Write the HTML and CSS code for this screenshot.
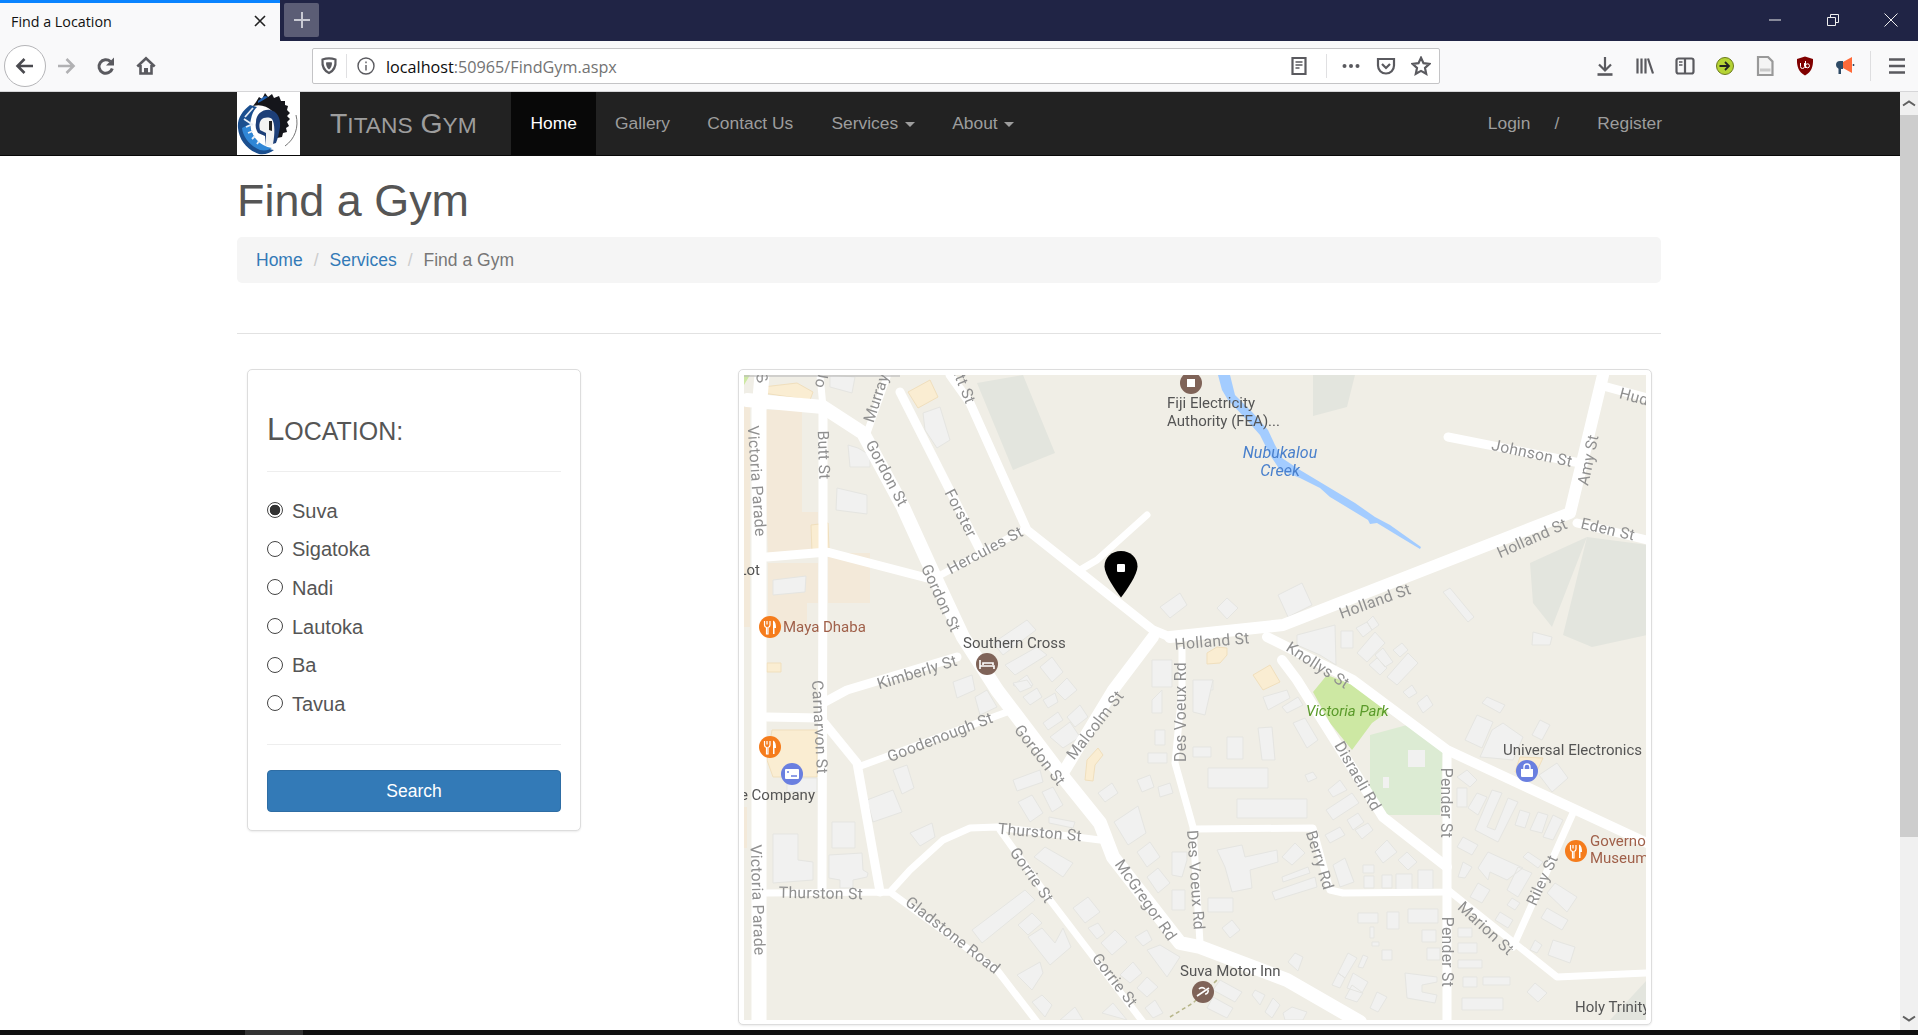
FILE: index.html
```html
<!DOCTYPE html>
<html lang="en">
<head>
    <meta charset="UTF-8">
    <meta name="viewport" content="width=device-width, initial-scale=1.0">
    <title>Find a Location</title>
    <link rel="stylesheet" href="styles.css">
</head>
<body>
    <!-- browser chrome -->
    <div class="tabbar">
        <div class="tab">
            <span class="tab-title">Find a Location</span>
            <svg class="tab-close" viewBox="0 0 12 12"><path d="M1 1l10 10M11 1L1 11"/></svg>
        </div>
        <div class="new-tab"><svg viewBox="0 0 20 20"><path d="M10 2v16M2 10h16"/></svg></div>
        <div class="win-controls">
            <svg viewBox="0 0 14 14"><path d="M1 7h12"/></svg>
            <svg viewBox="0 0 14 14"><path d="M1.500 4.500h8v8h-8zM4.500 4.500v-3h8v8h-3"/></svg>
            <svg viewBox="0 0 14 14"><path d="M0.500 0.500l13 13M13.500 0.500l-13 13"/></svg>
        </div>
    </div>
    <div class="toolbar">
        <div class="back-btn">
            <svg viewBox="0 0 20 20"><path d="M18 10H2.500M9.500 3l-7 7 7 7"/></svg>
        </div>
        <svg class="tb-icon forward" viewBox="0 0 20 20"><path d="M2 10h15.500M10.500 3l7 7-7 7"/></svg>
        <svg class="tb-icon reload" viewBox="0 0 20 20"><path d="M16.300 12.500a6.800 6.800 0 1 1-1.800-7"/><path class="solid" d="M18 1.500v8h-8z"/></svg>
        <svg class="tb-icon home" viewBox="0 0 20 20"><path d="M1.300 10.500L10 2.300l8.700 8.200M4.500 9v8.500h11V9"/><path class="solid" d="M8 12h4v5.500H8z"/></svg>
        <div class="urlbar">
            <svg class="tb-icon" viewBox="0 0 20 20"><path d="M3.500 3.500c4-1.300 9-1.300 13 0 .5 6-1 11-6.500 13.500C4.500 14.500 3 9.500 3.500 3.500z"/><path class="solid" d="M7 6.500c2-.4 4-.4 6 0 0 3-.8 5.500-3 7-2.200-1.500-3-4-3-7z"/></svg>
            <span class="url-sep first"></span>
            <svg class="tb-icon thin info" viewBox="0 0 20 20"><circle cx="10" cy="10" r="8"/><path d="M10 9v5.500M10 5.500v1.800"/></svg>
            <span class="url-text"><b>localhost</b>:50965/FindGym.aspx</span>
            <svg class="tb-icon reader" viewBox="0 0 20 20"><path d="M3.500 2h13v16h-13z"/><path class="hair" d="M6.500 6h7M6.500 9h7M6.500 12h4"/></svg>
            <span class="url-sep"></span>
            <svg class="tb-icon dots" viewBox="0 0 20 20"><circle cx="3.500" cy="10" r="2"/><circle cx="10" cy="10" r="2"/><circle cx="16.500" cy="10" r="2"/></svg>
            <svg class="tb-icon" viewBox="0 0 20 20"><path d="M2 3h16v6.500c0 4.500-3.500 8-8 8s-8-3.500-8-8z"/><path d="M6 8l4 4 4-4"/></svg>
            <svg class="tb-icon star" viewBox="0 0 20 20"><path d="M10 1.800l2.500 5.400 5.900.7-4.400 4 1.200 5.900L10 14.900l-5.200 2.900L6 11.900l-4.400-4 5.900-.7z"/></svg>
        </div>
        <div class="tb-right">
            <svg class="tb-icon" viewBox="0 0 20 20"><path d="M10 1v13M4 8.500l6 6 6-6"/><path d="M2.500 18.500h15" class="thick"/></svg>
            <svg class="tb-icon" viewBox="0 0 20 20"><path d="M2.500 2.500v15M6.500 2.500v15M10.500 2.500v15M13 2.500l5 15"/></svg>
            <svg class="tb-icon" viewBox="0 0 20 20"><rect x="1.500" y="2.500" width="17" height="15" rx="2"/><path d="M10 2.500v15"/><path class="hair" d="M4 6h3.500M4 9h3.500"/></svg>
            <svg class="tb-icon flat" viewBox="0 0 20 20"><circle cx="10" cy="10" r="8.500" fill="#b5d334" stroke="#6b7a1c" stroke-width="1"/><path d="M4.500 10h9M10 6l4 4-4 4" fill="none" stroke="#222" stroke-width="1.800"/></svg>
            <svg class="tb-icon flat" viewBox="0 0 20 20"><path d="M3 1h10l4.500 4.500V19H3z" fill="#f4f4f4" stroke="#999"/><path d="M5 12.500h10.500v3H5z" fill="#c9c9c9"/></svg>
            <svg class="tb-icon flat" viewBox="0 0 20 20"><path d="M10 0.500l8 2.500c.3 7.500-1.500 13-8 16.500C3.500 16 1.700 10.500 2 3z" fill="#800000"/><path d="M5.500 7v3.500a2 2 0 0 0 4 0V7M10.500 5v7" fill="none" stroke="#fff" stroke-width="1"/><circle cx="12.500" cy="9.800" r="2" fill="none" stroke="#fff" stroke-width="1"/></svg>
            <svg class="tb-icon flat" viewBox="0 0 20 20"><path d="M1 9a4 4 0 0 1 4-4h3v8H6v5H3.500v-5.300A4 4 0 0 1 1 9z" fill="#2f4b66"/><path d="M8 6l9-5v16l-9-5z" fill="#ff6a39"/><path d="M18.500 8v2" stroke="#2f4b66" stroke-width="1.500"/></svg>
            <span class="tb-sep"></span>
            <svg class="tb-icon burger" viewBox="0 0 20 20"><path d="M2 3.500h16M2 10h16M2 16.500h16"/></svg>
        </div>
    </div>

    <!-- page -->
    <div class="viewport">
        <div class="site">
            <nav class="navbar">
                <svg class="logo" viewBox="0 0 63 63">
                    <rect width="63" height="63" fill="#fff"/>
                    <path d="M59 23c3 12-1 24-11 31" stroke="#777" stroke-width="1" fill="none"/>
                    <path d="M13 13C5 19 0 27 1 36c1 12 9 22 21 26 6 1 11-1 15-4-7-1-14-4-18-10-5-7-7-14-5-21 1-5 3-9 6-12z" fill="#1b4f8f"/>
                    <path d="M5 36c1 9 8 18 18 22 5 1 9 0 12-2-6-1-12-4-16-9-4-5-6-10-6-15z" fill="#2f86d6"/>
                    <path d="M19 10l3-5 3 2 3-6 3 4 4-3 2 4 5-2 2 5 4 0 0 4 3 1-1 4 3 3-3 3 3 3-3 3 2 4-3 2 1 4-4 1-1 4-5 1-2 2c3-10 3-21-3-29-5-5-12-7-19-5z" fill="#15161b"/>
                    <path d="M21 9l4-3 3-2 3 1c-3 2-6 4-10 6z" fill="#1f62b5"/>
                    <path d="M19 30c0-8 7-13 14-12 7 1 11 8 10 17-1 6-2 11-4 16l-10 3 -1-10-7-3c-2-3-3-7-2-11z" fill="#1d3f78"/>
                    <path d="M24 28c3-3 8-3 11-1 3 5 3 15 1 25-2 2-5 2-7 2l0-13-6-3c-1-4-1-7 1-10z" fill="#f3f3f3"/>
                    <path d="M32 29l3 0 0 10-3-1z" fill="#222"/>
                    <path d="M8 25l8-9M7 27l9 6M9 35l7-3M11 41l5-2M15 47l3-3M20 52l2-3" stroke="#e8eef6" stroke-width="1.800" fill="none"/>
                </svg>
                <a class="brand" href="#">T<span class="sc">itans</span> G<span class="sc">ym</span></a>
                <ul class="nav-links">
                    <li class="active"><a href="#">Home</a></li>
                    <li><a href="#">Gallery</a></li>
                    <li><a href="#">Contact Us</a></li>
                    <li><a href="#">Services <span class="caret"></span></a></li>
                    <li><a href="#">About <span class="caret"></span></a></li>
                </ul>
                <div class="nav-auth">
                    <a href="#">Login</a>
                    <span class="slash">/</span>
                    <a href="#">Register</a>
                </div>
            </nav>

            <div class="container">
                <h1>Find a Gym</h1>
                <ol class="breadcrumb">
                    <li><a href="#">Home</a></li>
                    <li class="bc-sep">/</li>
                    <li><a href="#">Services</a></li>
                    <li class="bc-sep">/</li>
                    <li class="bc-current">Find a Gym</li>
                </ol>
                <hr class="page-rule">
                <div class="finder">
                    <form class="panel location-panel">
                        <h3>L<span class="sc">ocation:</span></h3>
                        <hr>
                        <div class="radio-list">
                            <label><input type="radio" name="loc" checked> <span>Suva</span></label>
                            <label><input type="radio" name="loc"> <span>Sigatoka</span></label>
                            <label><input type="radio" name="loc"> <span>Nadi</span></label>
                            <label><input type="radio" name="loc"> <span>Lautoka</span></label>
                            <label><input type="radio" name="loc"> <span>Ba</span></label>
                            <label><input type="radio" name="loc"> <span>Tavua</span></label>
                        </div>
                        <hr>
                        <button type="button" class="btn-search">Search</button>
                    </form>
                    <div class="panel map-panel">
                        <svg class="map" viewBox="744 375 902 645" width="902" height="645">
                            <defs>
                                <symbol id="food" viewBox="-11 -11 22 22" overflow="visible">
                                    <circle r="11" fill="#f57c1c"/>
                                    <path d="M-5.500 -6v4c0 1.500 1 2.200 2 2.500V7h1.500V.5c1-.3 2-1 2-2.500v-4M-3 -6v3.500" fill="none" stroke="#fff" stroke-width="1.200"/>
                                    <path d="M3 7V-6.500c2.500 1 3 4 3 7.500H4.500v6z" fill="#fff"/>
                                </symbol>
                            </defs>
                            <rect x="744" y="375" width="902" height="645" fill="#f0eee6"/>

                            <!-- land areas -->
                            <path class="tan-soft" d="M763 410L802 410 802 512 818 512 818 552 768 553Z M744 407L750 407 750 627 744 627Z M768 563L818 563 818 603 807 603 807 627 768 627Z M828 553L870 553 870 603 828 603Z M744 807L747 807 747 848 744 848Z"/>
                            <path class="tan" d="M763 387L797 383 813 392 810 400 763 393Z M908 392L930 380 938 397 918 408Z M811 525L828 523 829 548 812 553Z M767 663L781 663 781 672 767 672Z M772 730L817 730 817 777 773 777 767 760Z M1085 780L1087 760 1098 748 1103 755 1095 765 1093 781Z M1207 653L1217 647 1227 648 1227 655 1220 663 1207 664Z M1253 675L1270 665 1280 682 1263 690Z M1515 772L1520 757 1543 758 1535 775Z"/>
                            <path class="grey-zone" d="M977 383L1023 375 1055 453 1013 470Z M1313 375L1355 375 1347 407 1313 416Z M1530 563L1587 537 1552 627 1533 603Z M1587 537L1647 545 1647 635 1592 647 1563 635Z M1610 1020L1647 980 1647 1020Z"/>
                            <path class="park" d="M1313 692L1327 675 1353 685 1390 710 1372 723 1352 750 1330 723Z M744 375L750 375 744 385Z"/>
                            <path class="park-soft" d="M1370 735L1407 725 1443 750 1440 815 1387 815 1370 793Z"/>

                            <!-- buildings -->
                            <path class="bldg" d="M923 413L940 407 950 440 937 448 925 430Z M848 445L858 448 870 455 870 467 850 467Z M837 488L867 495 867 514 836 510Z M773 580L806 576 805 592 773 595Z M830 375L855 377 852 393 830 387Z M993 643L1027 620 1036 630 1003 655Z M1005 665L1037 647 1047 655 1015 675Z M1040 667L1052 657 1063 672 1052 682Z M1013 685L1027 675 1033 685 1022 690Z M1160 607L1180 593 1187 605 1170 618Z M1152 660L1172 660 1172 687 1152 687Z M953 682L972 675 975 690 957 698Z M1055 690L1067 678 1077 690 1065 700Z"/>
                            <path class="bldg" d="M1217 608L1227 598 1238 608 1227 619Z M1278 595L1302 583 1312 605 1288 617Z M1443 592L1450 588 1474 617 1468 622Z M1533 632L1552 637 1550 645 1532 645Z M1297 635L1335 625 1336 665 1320 655 1297 645Z M1341 631L1353 631 1353 648 1341 648Z M1356 628L1367 622 1372 630 1363 637Z M1367 622L1373 616 1379 625 1372 630Z M1357 653L1375 632 1385 643 1367 662Z M1375 655L1383 648 1393 662 1385 667Z M1393 650L1402 643 1408 650 1400 657Z M1369 665L1377 658 1387 668 1380 675Z M1387 677L1408 653 1418 663 1397 685Z M1198 682L1213 680 1213 690 1198 690Z"/>
                            <path class="bldg" d="M787 778L817 778 817 792 787 792Z M773 834L798 834 798 860 813 862 813 880 773 883Z M832 822L855 822 855 848 832 848Z M829 855L862 853 863 870 868 873 867 877 853 880 853 888 840 888 840 880 829 878Z M867 800L893 790 902 812 873 822Z M893 770L907 765 914 788 902 794Z M910 833L932 823 935 837 920 846Z M975 697L987 690 997 707 980 715Z M1013 780L1040 770 1043 782 1017 791Z M1018 802L1032 795 1043 813 1030 822Z M1042 792L1053 787 1063 805 1052 812Z M1049 817L1075 822 1073 828 1049 823Z M1034 857L1045 847 1073 863 1063 877Z M972 930L1025 890 1035 900 982 943Z M1018 925L1032 913 1042 923 1028 935Z M1028 937L1042 928 1055 943 1063 928 1071 947 1050 965Z M1017 975L1040 962 1043 973 1032 990Z M1032 1002L1042 995 1052 1005 1045 1017Z M1060 1020L1075 1007 1083 1020Z M1102 1013L1113 1003 1127 1020Z"/>
                            <path class="bldg" d="M1013 683L1027 680 1032 687 1020 692Z M1023 697L1037 688 1042 697 1030 705Z M1043 700L1055 693 1058 702 1048 708Z M1043 723L1058 712 1063 720 1048 730Z M1067 717L1080 705 1088 717 1075 727Z M1050 737L1070 722 1080 737 1063 748Z M1098 793L1112 783 1118 793 1105 802Z M1137 780L1150 775 1154 787 1142 792Z M1158 787L1170 783 1173 793 1160 797Z M1114 822L1138 806 1146 833 1128 845Z M1137 852L1150 842 1160 857 1147 867Z M1147 877L1158 868 1170 883 1158 893Z M1073 908L1088 897 1100 912 1085 923Z M1088 928L1098 923 1105 933 1097 939Z M1101 943L1115 930 1127 942 1112 955Z M1135 937L1147 930 1152 940 1143 946Z M1147 950L1160 945 1180 957 1167 977Z M1120 975L1133 962 1142 973 1130 983Z M1137 988L1147 977 1158 987 1147 997Z M1145 1008L1155 1000 1163 1013 1153 1018Z M1155 730L1165 730 1165 745 1155 745Z M1148 753L1167 753 1167 763 1148 763Z M1152 700L1162 690 1162 713 1152 713Z"/>
                            <path class="bldg" d="M1193 680L1213 680 1205 715 1193 712Z M1227 737L1243 737 1243 759 1227 759Z M1258 728L1272 727 1275 760 1262 760Z M1193 747L1211 747 1211 757 1193 757Z M1208 768L1268 768 1268 788 1208 788Z M1237 799L1307 799 1307 818 1237 818Z M1217 850L1242 845 1245 857 1277 850 1278 862 1250 870 1252 888 1232 892 1225 867Z M1282 857L1295 843 1305 853 1292 865Z M1172 852L1187 852 1187 860 1182 877 1172 875Z M1172 890L1185 890 1185 910 1172 910Z M1208 898L1233 898 1233 912 1208 912Z M1222 928L1232 920 1240 930 1230 938Z M1288 962L1295 953 1303 957 1298 971Z M1263 697L1287 690 1290 698 1268 710Z M1282 707L1298 697 1303 705 1287 713Z M1293 723L1305 718 1318 740 1307 748Z M1305 775L1313 772 1317 778 1308 782Z M1328 790L1340 780 1347 790 1333 797Z M1326 810L1352 793 1359 803 1333 820Z M1347 820L1358 813 1364 822 1353 830Z M1355 830L1368 823 1373 830 1362 839Z M1325 835L1340 827 1345 835 1330 843Z M1375 852L1387 840 1397 852 1383 863Z M1398 860L1407 852 1417 862 1408 870Z M1333 865L1345 858 1354 882 1340 887Z"/>
                            <path class="bldg" d="M1363 865L1374 865 1374 873 1363 873Z M1364 876L1374 876 1374 888 1364 888Z M1382 875L1392 875 1392 888 1382 888Z M1396 874L1412 874 1412 892 1396 892Z M1418 870L1433 870 1433 889 1418 889Z M1272 892L1315 877 1317 887 1275 900Z M1282 877L1308 867 1310 873 1283 882Z M1457 777L1467 770 1477 780 1470 787Z M1457 788L1467 788 1467 807 1457 807Z M1468 808L1477 793 1487 797 1478 815Z M1475 830L1492 790 1502 793 1487 827 1495 830 1508 798 1518 802 1498 842Z M1515 825L1520 810 1530 813 1525 828Z M1530 830L1538 812 1548 815 1542 833Z M1543 837L1553 815 1563 820 1553 840Z M1457 847L1463 837 1478 845 1472 855Z M1458 877L1463 862 1472 867 1465 878Z M1478 868L1488 852 1523 868 1507 880 1490 872 1488 880Z M1507 890L1518 867 1532 873 1518 897Z M1523 857L1528 852 1543 862 1538 868Z M1470 897L1478 883 1490 890 1482 903Z M1507 905L1512 898 1520 903 1515 910Z M1495 920L1500 912 1513 920 1508 928Z M1547 893L1555 883 1577 897 1567 912Z M1541 918L1547 908 1568 920 1562 930Z M1530 950L1535 940 1542 945 1537 953Z M1548 955L1553 940 1575 947 1570 963Z"/>
                            <path class="bldg" d="M1465 740L1477 715 1493 722 1482 748Z M1480 757L1492 730 1503 723 1510 728 1523 737 1513 760 1492 758Z M1532 735L1540 720 1550 725 1542 740Z M1482 703L1487 697 1505 705 1500 713Z M1403 692L1412 685 1417 693 1409 698Z M1417 703L1427 695 1433 705 1423 713Z M1539 775L1557 763 1568 778 1552 792Z M1358 913L1378 913 1378 923 1358 923Z M1387 912L1399 912 1399 929 1387 929Z M1408 909L1438 909 1438 923 1408 923Z M1422 930L1436 930 1436 942 1422 942Z M1427 948L1440 948 1440 960 1427 960Z M1370 927L1374 927 1374 938 1370 938Z M1372 942L1379 942 1379 946 1372 946Z M1382 950L1392 950 1392 960 1382 960Z M1338 973L1348 953 1357 958 1345 978Z M1358 967L1363 955 1368 957 1363 968Z M1332 985L1338 973 1345 978 1340 988Z M1347 988L1353 973 1368 982 1362 993Z M1345 998L1352 985 1363 993 1357 1002Z M1370 1008L1377 992 1387 997 1378 1012Z M1405 973L1437 977 1437 982 1422 985 1422 992 1437 995 1435 1003 1407 998Z M1458 928L1472 928 1472 937 1458 937Z M1458 943L1477 943 1477 953 1458 953Z M1458 960L1482 960 1482 968 1458 968Z M1463 977L1477 977 1477 987 1463 987Z M1483 977L1510 977 1510 985 1483 985Z M1462 998L1503 998 1503 1010 1462 1010Z M1527 992L1535 983 1547 993 1538 1002Z M1213 990L1220 980 1242 992 1235 1002Z M1207 1008L1213 997 1233 1008 1227 1018Z M1252 995L1255 990 1265 995 1260 1005Z M1265 1012L1273 998 1280 1005 1272 1018Z M1283 1013L1292 1007 1307 1012 1303 1020 1285 1020Z"/>
                            <path class="bldg-on-park" d="M1408 750L1425 750 1425 767 1408 767Z M1383 777L1389 777 1389 788 1383 788Z"/>

                            <!-- water -->
                            <path class="creek" d="M1218 375L1230 375 1235 395 1252 412 1268 430 1275 445 1282 458 1300 470 1325 485 1355 503 1375 517 1390 525 1421 547 1420 549 1400 537 1377 523 1370 524 1368 520 1340 503 1330 497 1320 488 1300 478 1280 470 1270 455 1260 435 1245 418 1228 400 1222 390Z"/>

                            <!-- roads -->
                            <path class="road r15" d="M762 375L759 410V1020"/>
                            <path class="road r14" d="M747 400L823 407 863 433 903 507 933 573 963 637 997 690 1063 777 1100 823 1113 857 1180 943 1200 947 1287 980 1360 1022"/>
                            <path class="road r7" d="M820 375L823 407"/>
                            <path class="road r9" d="M823 407V552L822 890M767 557L827 552 927 578M822 720L857 763 880 892M767 717L820 718M900 392L980 550"/>
                            <path class="road r7" d="M937 577L1023 530M887 377L867 433M1147 515L1097 560 1080 570M1007 712L858 767M1448 890L1557 977 1647 973M1573 813L1513 947M767 893L890 892 910 870 943 840 970 828 997 827 1100 840M1000 830L1050 900 1143 1022M890 892L997 970 1037 1022M1182 650V690L1175 763 1193 827 1200 943M1195 829L1313 828 1330 890 1343 893 1447 892"/>
                            <path class="road r9" d="M950 375L970 403 1027 530 1153 630 1170 637M957 657L847 690 823 703M1448 437L1580 463M1577 523L1647 540M1607 387L1647 398M1447 750V1022"/>
                            <path class="road r12" d="M1170 637L1283 625 1570 513 1603 375M1153 637L1113 690 1063 773"/>
                            <path class="road r10" d="M1267 637L1353 680 1447 750 1647 843M1282 660L1297 680 1383 817 1447 867"/>

                            <path class="trail" d="M1170 1017L1193 1003 1217 980"/>
                            <rect class="map-shade" x="744" y="375" width="156" height="2"/>

                            <!-- road names -->
                            <g class="road-labels">
                                <text transform="translate(762 378) rotate(70)">S</text>
                                <text transform="translate(822 379) rotate(100)">Jo</text>
                                <text transform="translate(757 481) rotate(86)">Victoria Parade</text>
                                <text transform="translate(824 455) rotate(88)">Butt St</text>
                                <text transform="translate(876 398) rotate(-72)">Murray</text>
                                <text transform="translate(887 473) rotate(62)">Gordon St</text>
                                <text transform="translate(961 513) rotate(63)">Forster</text>
                                <text transform="translate(962 380) rotate(68)">Butt St</text>
                                <text transform="translate(985 550) rotate(-28)">Hercules St</text>
                                <text transform="translate(941 598) rotate(65)">Gordon St</text>
                                <text transform="translate(917 672) rotate(-17)">Kimberly St</text>
                                <text transform="translate(820 727) rotate(87)">Carnarvon St</text>
                                <text transform="translate(940 737) rotate(-21)">Goodenough St</text>
                                <text transform="translate(1040 755) rotate(52)">Gordon St</text>
                                <text transform="translate(1095 725) rotate(-52)">Malcolm St</text>
                                <text transform="translate(1040 832) rotate(5)">Thurston St</text>
                                <text transform="translate(1032 875) rotate(55)">Gorrie St</text>
                                <text transform="translate(1146 900) rotate(55)">McGregor Rd</text>
                                <text transform="translate(1115 980) rotate(52)">Gorrie St</text>
                                <text transform="translate(821 893) rotate(1)">Thurston St</text>
                                <text transform="translate(953 935) rotate(38)">Gladstone Road</text>
                                <text transform="translate(758 900) rotate(88)">Victoria Parade</text>
                                <text transform="translate(1532 453) rotate(12)">Johnson St</text>
                                <text transform="translate(1588 460) rotate(-78)">Amy St</text>
                                <text transform="translate(1532 538) rotate(-24)">Holland St</text>
                                <text transform="translate(1608 529) rotate(13)">Eden St</text>
                                <text transform="translate(1647 400) rotate(15)">Hudson</text>
                                <text transform="translate(1375 601) rotate(-20)">Holland St</text>
                                <text transform="translate(1212 641) rotate(-5)">Holland St</text>
                                <text transform="translate(1318 665) rotate(33)">Knollys St</text>
                                <text transform="translate(1180 712) rotate(-90)">Des Voeux Rd</text>
                                <text transform="translate(1196 880) rotate(86)">Des Voeux Rd</text>
                                <text transform="translate(1358 776) rotate(60)">Disraeli Rd</text>
                                <text transform="translate(1320 860) rotate(73)">Berry Rd</text>
                                <text transform="translate(1446 803) rotate(90)">Pender St</text>
                                <text transform="translate(1447 952) rotate(90)">Pender St</text>
                                <text transform="translate(1486 928) rotate(43)">Marion St</text>
                                <text transform="translate(1542 880) rotate(-65)">Riley St</text>
                            </g>

                            <!-- place names -->
                            <g class="poi-labels">
                                <text x="760" y="575" text-anchor="end">Lot</text>
                                <text x="963" y="648">Southern Cross</text>
                                <text x="815" y="800" text-anchor="end">The Company</text>
                                <text x="1167" y="408">Fiji Electricity</text>
                                <text x="1167" y="426">Authority (FEA)...</text>
                                <text x="1503" y="755">Universal Electronics</text>
                                <text x="1180" y="976">Suva Motor Inn</text>
                                <text x="1575" y="1012">Holy Trinity</text>
                                <text class="food-name" x="783" y="632">Maya Dhaba</text>
                                <text class="food-name" x="1590" y="846">Governor's</text>
                                <text class="food-name" x="1590" y="863">Museum</text>
                                <text class="water-name" x="1280" y="458" text-anchor="middle">Nubukalou</text>
                                <text class="water-name" x="1280" y="476" text-anchor="middle">Creek</text>
                                <text class="park-name" x="1306" y="716">Victoria Park</text>
                            </g>

                            <!-- markers -->
                            <use href="#food" x="759" y="736" width="22" height="22"/>
                            <use href="#food" x="759" y="616" width="22" height="22"/>
                            <use href="#food" x="1565" y="840" width="22" height="22"/>
                            <circle class="poi-brown" cx="987" cy="664" r="11"/>
                            <path d="M980 669v-9M980 666h14v3M983 665v-2h10v2" fill="none" stroke="#fff" stroke-width="1.600"/>
                            <circle class="poi-brown" cx="1191" cy="383" r="11"/>
                            <rect x="1187" y="379" width="8" height="8" fill="#fff"/>
                            <circle class="poi-brown" cx="1203" cy="992" r="11"/>
                            <path d="M1197 996l12-8M1199 989a4 4 0 0 1 6 0M1205 994a3 3 0 0 0 3-4" fill="none" stroke="#fff" stroke-width="1.600"/>
                            <circle class="poi-blue" cx="792" cy="774" r="11"/>
                            <rect x="785" y="769" width="14" height="10" rx="1" fill="#fff"/>
                            <path d="M787 772h2M791 776h6" stroke="#6a7fe0" stroke-width="1.500"/>
                            <circle class="poi-blue" cx="1527" cy="771" r="11"/>
                            <path d="M1521 769h12v7a1 1 0 0 1-1 1h-10a1 1 0 0 1-1-1z" fill="#fff"/>
                            <path d="M1524 769v-2a3 3 0 0 1 6 0v2" fill="none" stroke="#fff" stroke-width="1.400"/>

                            <path class="pin" d="M1121 551c9.500 0 16.500 6.500 16.500 15.500 0 8-10.500 23-16.500 31-6-8-16.500-23-16.500-31 0-9 7-15.500 16.500-15.500z"/>
                            <rect x="1117" y="564" width="8" height="8" rx="1" fill="#fff"/>
                        </svg>
                    </div>
                </div>
            </div>
        </div>
        <div class="scrollbar">
            <svg class="sb-arrow" viewBox="0 0 18 12"><path d="M3 8l6-4 6 4"/></svg>
            <div class="sb-thumb"></div>
            <div class="sb-track"></div>
            <svg class="sb-arrow" viewBox="0 0 18 12"><path d="M3 4l6 4 6-4"/></svg>
        </div>
    </div>
    <div class="taskbar"><span class="task-item"></span></div>
</body>
</html>
```

FILE: styles.css
```css
* {
    box-sizing: border-box;
}
html, body {
    height: 1035px;
    overflow: hidden;
}
body {
    margin: 0;
    padding: 0;
    font-family: "Liberation Sans", Arial, sans-serif;
    color: #555;
    background-color: white;
    display: flex;
    flex-direction: column;
}

/* browser chrome */
.tabbar {
    height: 41px;
    background-color: #202445;
    display: flex;
    align-items: flex-start;
    flex: none;
}
.tab {
    width: 280px;
    height: 41px;
    background-color: #f9f9fa;
    border-top: 3px solid #0a84ff;
    display: flex;
    align-items: center;
    justify-content: space-between;
    padding: 0 14px 2px 11px;
}
.tab-title {
    font-family: "Open Sans", sans-serif;
    font-size: 14.3px;
    color: #111;
}
.tab-close {
    width: 12px;
    height: 12px;
    fill: none;
    stroke: #222;
    stroke-width: 1.6;
}
.new-tab {
    width: 35px;
    height: 34px;
    margin: 3px 0 0 4px;
    background-color: #5b5d75;
    border-radius: 2px;
    display: flex;
    align-items: center;
    justify-content: center;
}
.new-tab svg {
    width: 20px;
    height: 20px;
    fill: none;
    stroke: #c9cad3;
    stroke-width: 2;
}
.win-controls {
    margin-left: auto;
    display: flex;
    gap: 44px;
    padding: 13px 20px 0 0;
}
.win-controls svg {
    width: 14px;
    height: 14px;
    fill: none;
    stroke: #eee;
    stroke-width: 1;
}

.toolbar {
    height: 51px;
    flex: none;
    background-color: #f9f9fa;
    border-bottom: 1px solid #d6d6d8;
    display: flex;
    align-items: center;
    padding: 0 0 1px 4px;
}
.tb-icon {
    width: 20px;
    height: 20px;
    flex: none;
    fill: none;
    stroke: #5a5a5f;
    stroke-width: 2.2;
}
.tb-icon .solid {
    fill: #5a5a5f;
    stroke: none;
}
.tb-icon .hair {
    stroke-width: 1.4;
}
.tb-icon .thick {
    stroke-width: 2.6;
}
.tb-icon.thin {
    stroke-width: 1.4;
}
.tb-icon.flat {
    stroke: none;
}
.tb-icon.dots {
    fill: #5a5a5f;
    stroke: none;
}
.back-btn {
    width: 42px;
    height: 42px;
    border: 1px solid #b5b5b8;
    border-radius: 50%;
    background-color: white;
    display: flex;
    align-items: center;
    justify-content: center;
}
.back-btn svg {
    width: 20px;
    height: 20px;
    fill: none;
    stroke: #4a4a4f;
    stroke-width: 2.6;
}
.forward {
    margin-left: 10px;
    stroke: #b1b1b3;
    stroke-width: 2.6;
}
.reload {
    margin-left: 20px;
    stroke-width: 3;
}
.home {
    margin-left: 20px;
    stroke-width: 2.6;
}
.urlbar {
    width: 1128px;
    height: 36px;
    margin-left: 156px;
    background-color: white;
    border: 1px solid #c4c4c6;
    border-radius: 2px;
    display: flex;
    align-items: center;
    gap: 14px;
    padding: 0 8px 0 6px;
}
.url-sep {
    width: 1px;
    height: 24px;
    background-color: #e0e0e2;
    flex: none;
}
.url-sep.first {
    margin: 0 -5px 0 -7px;
}
.url-text {
    flex: 1;
    margin-left: -4px;
    padding-top: 2px;
    font-family: "Open Sans", sans-serif;
    font-size: 16.2px;
    color: #737373;
}
.url-text b {
    font-weight: normal;
    color: #0c0c0d;
}
.reader {
    margin-right: 3px;
}
.dots {
    margin-right: 1px;
}
.star {
    margin-left: 1px;
}
.tb-right {
    margin-left: 155px;
    display: flex;
    align-items: center;
    gap: 20px;
}
.tb-sep {
    width: 1px;
    height: 30px;
    margin: 0 -3px 0 -5px;
    background-color: #dedee0;
}
.burger {
    stroke-width: 2.4;
    margin-left: -1px;
}

/* page area */
.viewport {
    height: 938px;
    flex: none;
    display: flex;
    overflow: hidden;
}
.site {
    flex: 1;
    min-width: 0;
}
.navbar {
    height: 64px;
    padding-left: 237px;
    padding-right: 238px;
    background-color: #222;
    border-bottom: 1px solid #080808;
    display: flex;
    align-items: stretch;
    font-size: 17.4px;
}
.logo {
    width: 63px;
    height: 63px;
    flex: none;
}
.brand {
    margin: 0 30px;
    width: 151px;
    flex: none;
    align-self: center;
    font-size: 28.4px;
    line-height: 1;
    color: #9d9d9d;
    text-decoration: none;
    white-space: nowrap;
}
.sc {
    font-size: 0.8em;
    text-transform: uppercase;
}
.nav-links {
    list-style: none;
    margin: 0;
    padding: 0;
    display: flex;
}
.nav-links a, .nav-auth a {
    color: #9d9d9d;
    text-decoration: none;
}
.nav-links li {
    display: flex;
    align-items: center;
    padding: 0 18.6px;
}
.nav-links li:nth-child(4) {
    padding-left: 19.6px;
}
.nav-links li.active {
    background-color: #080808;
    padding: 0 19.5px;
}
.nav-links li.active a {
    color: white;
}
.caret {
    display: inline-block;
    width: 0;
    height: 0;
    margin-left: 2px;
    vertical-align: middle;
    border-top: 5px solid;
    border-left: 5px solid transparent;
    border-right: 5px solid transparent;
}
.nav-auth {
    margin-left: auto;
    display: flex;
    align-items: center;
    color: #9d9d9d;
}
.slash {
    margin: 0 38px 0 24px;
}

.container {
    margin-left: 237px;
    width: 1424px;
}
h1 {
    margin: 0;
    padding-top: 18px;
    height: 81px;
    font-size: 44.9px;
    font-weight: normal;
    line-height: 54px;
    color: #555;
}
.breadcrumb {
    list-style: none;
    margin: 0;
    padding: 1px 19px 0;
    height: 46px;
    background-color: #f5f5f5;
    border-radius: 5px;
    display: flex;
    align-items: center;
    gap: 11px;
    font-size: 17.5px;
}
.breadcrumb a {
    color: #337ab7;
    text-decoration: none;
}
.bc-sep {
    color: #ccc;
}
.bc-current {
    color: #777;
}
.page-rule {
    margin: 50px 0 0;
    border: 0;
    border-top: 1px solid #e2e2e2;
}

.finder {
    display: flex;
    align-items: flex-start;
    margin-top: 35px;
}
.panel {
    background-color: white;
    border: 1px solid #ddd;
    border-radius: 5px;
    box-shadow: 0 1px 2px rgba(0, 0, 0, 0.08);
}
.location-panel {
    width: 334px;
    height: 462px;
    margin-left: 10px;
    padding: 42px 19px 0;
}
.location-panel h3 {
    margin: 0;
    height: 59px;
    font-size: 31.2px;
    font-weight: normal;
    line-height: 36px;
    color: #555;
}
.location-panel hr {
    margin: 0;
    border: 0;
    border-top: 1px solid #eee;
}
.radio-list {
    height: 272px;
    padding-top: 20px;
    display: flex;
    flex-direction: column;
}
.radio-list label {
    height: 38.6px;
    display: flex;
    align-items: center;
    font-size: 20px;
    color: #555;
}
.radio-list input {
    width: 16px;
    height: 16px;
    margin: 0 9px 0 0;
    appearance: none;
    border: 1px solid #444;
    border-radius: 50%;
    background-color: white;
    position: relative;
    top: -1px;
}
.radio-list input:checked {
    background-image: radial-gradient(circle, #333 0, #333 5px, white 5.6px);
}
.btn-search {
    display: block;
    width: 100%;
    height: 42px;
    margin-top: 25px;
    padding-top: 2px;
    border: 1px solid #2e6da4;
    border-radius: 4px;
    background-color: #337ab7;
    color: white;
    font-family: "Liberation Sans", Arial, sans-serif;
    font-size: 17.5px;
}

.map-panel {
    width: 914px;
    height: 656px;
    margin-left: 157px;
    padding: 5px;
}
.map {
    display: block;
    filter: blur(0.45px);
}
.tan-soft { fill: #f3e9d9; }
.tan { fill: #faedd2; stroke: #f0dfbd; stroke-width: 1; }
.grey-zone { fill: #e3e5de; }
.park { fill: #cde8a3; }
.park-soft { fill: #dcebd3; }
.bldg { fill: #f1f1f0; stroke: #e5e5e1; stroke-width: 1; }
.bldg-on-park { fill: #f1f1f0; }
.creek { fill: #a3ccff; }
.road { fill: none; stroke: white; stroke-linecap: round; stroke-linejoin: round; }
.r7 { stroke-width: 7; }
.r9 { stroke-width: 9; }
.r10 { stroke-width: 10; }
.r12 { stroke-width: 12; }
.r14 { stroke-width: 14; }
.r15 { stroke-width: 15; stroke-linecap: butt; }
.trail { fill: none; stroke: #b7b68a; stroke-width: 1.5; stroke-dasharray: 4 3; }
.map-shade { fill: #bbb; opacity: 0.6; }
.road-labels text {
    font-family: Roboto, sans-serif;
    font-size: 15.7px;
    letter-spacing: 0.3px;
    fill: #909090;
    text-anchor: middle;
    dominant-baseline: central;
}
.poi-labels text {
    font-family: Roboto, sans-serif;
    font-size: 15px;
    fill: #555;
}
.poi-labels .food-name { fill: #a0604a; }
.poi-labels .water-name { fill: #4a80cc; font-style: italic; font-size: 16px; }
.poi-labels .park-name { fill: #5a9a2a; font-style: italic; }
.poi-brown { fill: #7f6358; }
.poi-blue { fill: #6a7fe0; }
.pin { fill: black; }

/* scrollbar */
.scrollbar {
    width: 18px;
    flex: none;
    height: 938px;
    background-color: #f0f0f0;
    display: flex;
    flex-direction: column;
}
.sb-arrow {
    width: 18px;
    height: 23px;
    flex: none;
    fill: none;
    stroke: #606060;
    stroke-width: 2;
}
.sb-thumb {
    height: 722px;
    flex: none;
    background-color: #cdcdcd;
}
.sb-track {
    flex: 1;
}
.taskbar {
    flex: 1;
    background-color: #101010;
    padding-left: 245px;
}
.task-item {
    display: block;
    width: 58px;
    height: 100%;
    background-color: #333;
}
```
